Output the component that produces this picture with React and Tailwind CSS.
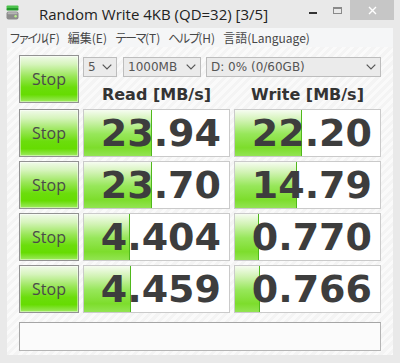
import React from 'react';

const ROWS = [
    { read: '23.94', readBar: 68, write: '22.20', writeBar: 67 },
    { read: '23.70', readBar: 68, write: '14.79', writeBar: 62 },
    { read: '4.404', readBar: 46, write: '0.770', writeBar: 24 },
    { read: '4.459', readBar: 47, write: '0.766', writeBar: 25 }
];

const MENU = [
    { kana: 'ファイル', rest: '(F)', squeeze: 'tracking-[-3px]' },
    { kana: '', rest: '編集(E)', squeeze: '' },
    { kana: 'テーマ', rest: '(T)', squeeze: 'tracking-[-2px]' },
    { kana: 'ヘルプ', rest: '(H)', squeeze: 'tracking-[-2px]' },
    { kana: '', rest: '言語(Language)', squeeze: '' }
];

function AppIcon() {
    return (
        <svg width="14" height="16" viewBox="0 0 14 16" className="shrink-0">
            <rect x="0.5" y="0.5" width="12" height="3" rx="1" fill="#4cc24c" />
            <rect x="0.5" y="3" width="12" height="2.5" rx="0.8" fill="#23982a" />
            <rect x="0.5" y="6.5" width="12" height="8" rx="2" fill="#8c8c8c" />
            <rect x="1.5" y="7.2" width="10" height="2" rx="1" fill="#b4b4b4" />
            <circle cx="9.6" cy="11.2" r="1.2" fill="#b9f08a" />
        </svg>
    );
}

function Chevron() {
    return (
        <svg width="10" height="6" viewBox="0 0 10 6" className="shrink-0">
            <path d="M0.7 0.7 L5 5 L9.3 0.7" fill="none" stroke="#555" strokeWidth="1.2" />
        </svg>
    );
}

function Combo({ label, className }) {
    return (
        <div className={`h-[20px] border border-[#bdbdbd] bg-[#ebebeb] flex items-center justify-between pl-[4px] pr-[4px] ${className}`}>
            <span className="text-[12px] leading-none text-[#555] font-['DejaVu_Sans',sans-serif]">{label}</span>
            <Chevron />
        </div>
    );
}

function StopButton() {
    return (
        <div className="w-[60px] h-[48px] shrink-0 border border-[#929292] bg-[linear-gradient(180deg,#f1faea_0%,#d6f4bc_18%,#98e656_45%,#6bdd0c_68%,#66dc02_84%,#9fea62_100%)] shadow-[inset_0_0_0_1px_rgba(255,255,255,0.45)] flex items-center justify-center">
            <span className="text-[16px] leading-none text-[#4a4a4a] font-['Open_Sans',sans-serif]">Stop</span>
        </div>
    );
}

function ResultBox({ value, bar }) {
    return (
        <div className="relative w-[147px] h-[48px] border border-[#cacaca] bg-white overflow-hidden">
            <div
                className="absolute left-0 top-0 bottom-0 border-r border-[#4fb81c] bg-[linear-gradient(180deg,#f6fcf1_0%,#d2f3b5_22%,#97e75a_52%,#7ddd2c_82%,#92e452_100%)]"
                style={{ width: `${bar}px` }}
            />
            <div className="relative h-full flex items-center justify-end pr-[8px]">
                <span className="text-[38px] leading-none font-bold text-[#3d3d3d] font-['DejaVu_Sans',sans-serif]">{value}</span>
            </div>
        </div>
    );
}

export default function App() {
    return (
        <div className="w-[400px] h-[363px] bg-[#e9e9e9] flex flex-col overflow-hidden">
            {/* Title bar */}
            <div className="h-[28px] shrink-0 flex items-start">
                <div className="pl-[6px] pt-[5px]">
                    <AppIcon />
                </div>
                <div className="pl-[19px] pt-[4px] text-[15px] leading-[20px] text-[#222] font-['Open_Sans',sans-serif] whitespace-nowrap">
                    Random Write 4KB (QD=32) [3/5]
                </div>
                <div className="ml-auto flex items-start">
                    <div className="w-[25px] h-[20px] flex items-center justify-center">
                        <div className="w-[8px] h-[2px] bg-[#333] mt-[6px]" />
                    </div>
                    <div className="w-[25px] h-[20px] flex items-center justify-center">
                        <div className="w-[9px] h-[7px] border border-[#8a8a8a] border-t-2" />
                    </div>
                    <div className="w-[44px] h-[20px] bg-[#c6c6c6] flex items-center justify-center mr-[6px]">
                        <svg width="9" height="9" viewBox="0 0 9 9">
                            <path d="M1 1 L8 8 M8 1 L1 8" stroke="#fff" strokeWidth="1.4" />
                        </svg>
                    </div>
                </div>
            </div>

            {/* Client area */}
            <div className="flex-1 mx-[7px] mb-[8px] flex flex-col">
                {/* Menu bar */}
                <div className="h-[19px] shrink-0 bg-[#f5f6f7] flex items-center gap-[8px] pl-[2px] text-[12px] leading-none text-[#474747] font-['Noto_Sans_CJK_JP',sans-serif]">
                    {MENU.map((m) => (
                        <span key={m.rest} className="whitespace-nowrap">
                            {m.kana && <span className={m.squeeze}>{m.kana}</span>}
                            {m.rest}
                        </span>
                    ))}
                </div>

                {/* Main panel */}
                <div className="flex-1 bg-[repeating-linear-gradient(135deg,#f4f4f4_0px,#f4f4f4_3px,#fafafa_3px,#fafafa_6px)] pl-[12px] pt-[8px] flex flex-col">
                    <div className="flex gap-[4px]">
                        <StopButton />
                        <div className="w-[298px] flex flex-col">
                            <div className="flex mt-[2px]">
                                <Combo label="5" className="w-[34px]" />
                                <Combo label="1000MB" className="w-[78px] ml-[6px]" />
                                <Combo label="D: 0% (0/60GB)" className="w-[175px] ml-[5px]" />
                            </div>
                            <div className="flex gap-[4px] mt-[8px] text-[16px] leading-[20px] font-bold text-[#333] font-['DejaVu_Sans',sans-serif]">
                                <div className="w-[147px] text-center">Read [MB/s]</div>
                                <div className="w-[147px] text-center">Write [MB/s]</div>
                            </div>
                        </div>
                    </div>

                    <div className="flex flex-col gap-[4px] mt-[4px]">
                        {ROWS.map((r, i) => (
                            <div key={i} className="flex gap-[4px]">
                                <StopButton />
                                <ResultBox value={r.read} bar={r.readBar} />
                                <ResultBox value={r.write} bar={r.writeBar} />
                            </div>
                        ))}
                    </div>

                    <div className="w-[362px] h-[29px] mt-[9px] border border-[#b4b4b4] border-t-[#a5a5a5] border-l-[#a5a5a5] bg-[#fbfbfb]" />
                </div>
            </div>
        </div>
    );
}
